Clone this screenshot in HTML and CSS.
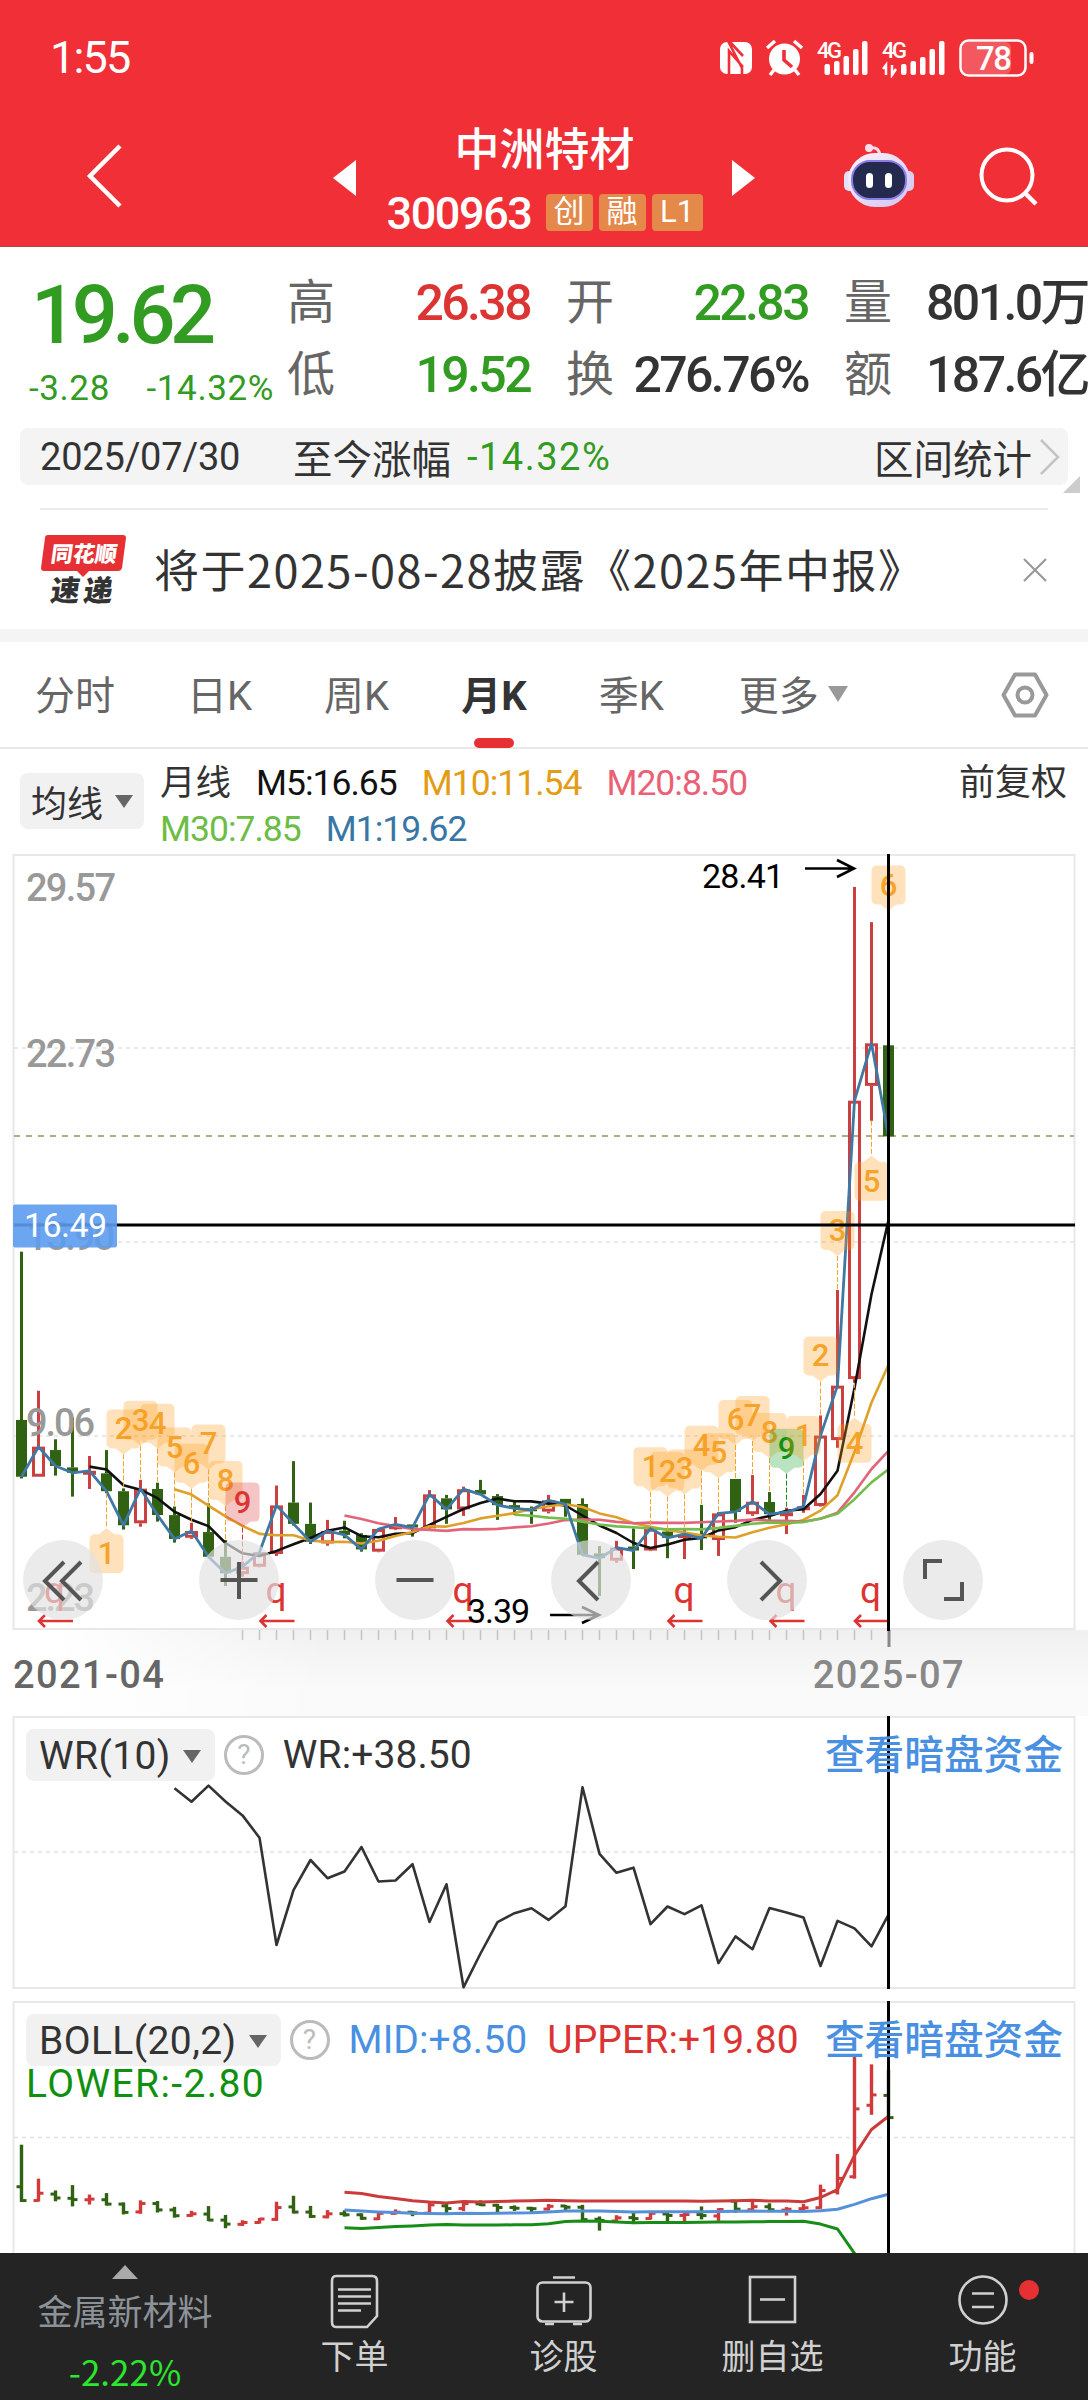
FILE: index.html
```html
<!doctype html>
<html lang="zh-CN">
<head>
  <meta charset="utf-8">
  <title>中洲特材 300963</title>
  <link rel="stylesheet" href="styles.css">
</head>
<body>
  <header class="top">
    <div class="status">
      <span class="clock">1:55</span>
      <svg class="status-icons" width="316" height="40" viewBox="19 6 316 40">
        <rect x="20" y="10" width="32" height="32" rx="7" fill="#fff"/>
        <path d="M28 9 L42 36 V43 M29 43 V19 L43 35 M30 10 L43 24" fill="none" stroke="#f12f37" stroke-width="2.6"/>
        <g fill="#fff">
          <circle cx="84.500" cy="27" r="15.500"/>
          <path d="M67 16 l8-7 M94 9 l8 7 M74 38 l-4 5 M95 38 l4 5" stroke="#fff" stroke-width="3.500"/>
        </g>
        <path d="M84 18 V28 L92 35" fill="none" stroke="#f12f37" stroke-width="3.600"/>
        <g fill="#fff">
          <text x="117" y="26" font-size="22" font-weight="500" textLength="25">4G</text>
          <rect x="124.500" y="32" width="5.500" height="11" rx="2"/>
          <rect x="134" y="29" width="5.500" height="14" rx="2"/>
          <rect x="143.500" y="24" width="5.500" height="19" rx="2"/>
          <rect x="153" y="17" width="5.500" height="26" rx="2"/>
          <rect x="162" y="9" width="5.500" height="34" rx="2"/>
          <text x="182" y="26" font-size="22" font-weight="500" textLength="25">4G</text>
          <path d="M186 43 V33 l-3 4 M192 33 V43 l4-6" fill="none" stroke="#fff" stroke-width="2.500"/>
          <rect x="201" y="32" width="5.500" height="11" rx="2"/>
          <rect x="210.500" y="29" width="5.500" height="14" rx="2"/>
          <rect x="220" y="25" width="5.500" height="18" rx="2"/>
          <rect x="229.500" y="17" width="5.500" height="26" rx="2"/>
          <rect x="239" y="9" width="5.500" height="34" rx="2"/>
          <rect x="262" y="10" width="49" height="32" rx="6" fill-opacity=".2"/>
          <rect x="260.500" y="8.500" width="65" height="35" rx="8" fill="none" stroke="#fff" stroke-width="2.500"/>
          <rect x="329.500" y="20" width="4" height="12" rx="2"/>
          <text x="276" y="38" font-size="33" font-weight="500" textLength="36">78</text>
        </g>
      </svg>
    </div>
    <div class="nav">
      <svg class="back" width="38" height="66" viewBox="0 0 38 66"><path d="M35 3 L5 33 L35 63" fill="none" stroke="#fff" stroke-width="4.500"/></svg>
      <svg class="prev" width="24" height="36" viewBox="0 0 24 36"><path d="M23 0 V36 L0 18z" fill="#fff"/></svg>
      <div class="title">
        <h1>中洲特材</h1>
        <div class="code"><span>300963</span><i>创</i><i>融</i><i>L1</i></div>
      </div>
      <svg class="next" width="24" height="36" viewBox="0 0 24 36"><path d="M0 0 V36 L23 18z" fill="#fff"/></svg>
      <svg class="robot" width="70" height="66" viewBox="0 0 70 66">
        <defs>
          <linearGradient id="shell" x1="0" y1="0" x2="1" y2="1"><stop offset="0" stop-color="#fdf5fb"/><stop offset="1" stop-color="#cfc5f3"/></linearGradient>
        </defs>
        <path d="M26 5 Q35 3 36 13" fill="none" stroke="#f6dbe9" stroke-width="3"/>
        <circle cx="25" cy="5" r="4" fill="#f9dfeb"/>
        <rect x="0" y="28" width="11" height="20" rx="5" fill="#e3e0fa"/>
        <rect x="59" y="28" width="11" height="20" rx="5" fill="#d8cdf3"/>
        <rect x="4" y="10" width="62" height="54" rx="27" fill="url(#shell)"/>
        <rect x="8" y="18" width="54" height="38" rx="18" fill="#232a4e" stroke="#8c7be8" stroke-width="2"/>
        <rect x="22" y="30" width="7" height="15" rx="3.500" fill="#fff"/>
        <rect x="41" y="30" width="7" height="15" rx="3.500" fill="#fff"/>
      </svg>
      <svg class="search" width="60" height="60" viewBox="0 0 60 60"><circle cx="28" cy="28" r="25.500" fill="none" stroke="#fff" stroke-width="4"/><path d="M46 46 L57 57" stroke="#fff" stroke-width="4.500"/></svg>
    </div>
  </header>

  <section class="quote">
    <div class="price">
      <strong>19.62</strong>
      <p><span>-3.28</span><span>-14.32%</span></p>
    </div>
    <div class="stats">
      <div><label>高</label><b class="up">26.38</b></div>
      <div><label>开</label><b class="down">22.83</b></div>
      <div><label>量</label><b>801.0万</b></div>
      <div><label>低</label><b class="down">19.52</b></div>
      <div><label>换</label><b>276.76%</b></div>
      <div><label>额</label><b>187.6亿</b></div>
    </div>
  </section>

  <section class="range">
    <span class="day">2025/07/30</span>
    <span class="since">至今涨幅</span>
    <span class="pct">-14.32%</span>
    <span class="interval">区间统计</span>
    <svg width="22" height="36" viewBox="0 0 22 36"><path d="M2 1 L19 18 L2 35" fill="none" stroke="#c4c4c4" stroke-width="2.500"/></svg>
    <i class="corner"></i>
  </section>

  <section class="news">
    <svg class="brand" width="88" height="72" viewBox="0 0 88 72">
      <path d="M8 1 H83 q3 0 3 3 L82 34 q-1 3-4 3 H49 L43 43 L37 37 H4 q-3 0-3-3 L5 4 q0-3 3-3z" fill="#e63034"/>
      <g transform="skewX(-8)">
        <text class="brand-a" x="14" y="28" textLength="66">同花顺</text>
        <text class="brand-b" x="19" y="67" textLength="62">速递</text>
      </g>
    </svg>
    <p>将于2025-08-28披露《2025年中报》</p>
    <svg class="close" width="26" height="26" viewBox="0 0 26 26"><path d="M2 2 L24 24 M24 2 L2 24" stroke="#999" stroke-width="2.200"/></svg>
  </section>

  <nav class="tabs">
    <a>分时</a>
    <a>日K</a>
    <a>周K</a>
    <a class="active">月K</a>
    <a>季K</a>
    <a class="more">更多<i></i></a>
    <svg width="48" height="46" viewBox="0 0 48 46"><path d="M14 2.500 H34 L45.500 23 L34 43.500 H14 L2.500 23z" fill="none" stroke="#999" stroke-width="4" stroke-linejoin="round"/><circle cx="24" cy="23" r="7.500" fill="none" stroke="#999" stroke-width="4"/></svg>
  </nav>

  <section class="ma">
    <button>均线<i></i></button>
    <div class="ma-values">
      <p><em>月线</em><span class="m5">M5:16.65</span><span class="m10">M10:11.54</span><span class="m20">M20:8.50</span></p>
      <p><span class="m30">M30:7.85</span><span class="m1">M1:19.62</span></p>
    </div>
    <span class="adjust">前复权</span>
  </section>

  <section class="panel kline">
    <svg id="kline" width="1088" height="778" viewBox="0 0 1088 778"></svg>
    <div class="controls">
      <button><svg viewBox="0 0 80 80"><path d="M41 22 L22 41 L41 60 M58 22 L39 41 L58 60"/></svg></button>
      <button><svg viewBox="0 0 80 80"><path d="M40 22 V59 M21.500 40 H58.500"/></svg></button>
      <button><svg viewBox="0 0 80 80"><path d="M21.500 40 H58.500"/></svg></button>
      <button><svg viewBox="0 0 80 80"><path d="M47 22 L28 41 L47 60"/></svg></button>
      <button><svg viewBox="0 0 80 80"><path d="M34 22 L53 41 L34 60"/></svg></button>
      <button><svg viewBox="0 0 80 80"><path d="M22 39 V21 H39 M59 42 V59 H41"/></svg></button>
    </div>
  </section>

  <section class="axis">
    <svg id="ticks" width="1088" height="20" viewBox="0 0 1088 20"></svg>
    <div class="dates"><span>2021-04</span><span class="last">2025-07</span></div>
  </section>

  <section class="panel wr">
    <svg id="wr" width="1088" height="273" viewBox="0 0 1088 273"></svg>
    <div class="legend">
      <button>WR(10)<i></i></button>
      <span class="help">?</span>
      <span>WR:+38.50</span>
      <a>查看暗盘资金</a>
    </div>
  </section>

  <section class="panel boll">
    <svg id="boll" width="1088" height="252" viewBox="0 0 1088 252"></svg>
    <div class="legend">
      <button>BOLL(20,2)<i></i></button>
      <span class="help">?</span>
      <span class="mid">MID:+8.50</span>
      <span class="upper">UPPER:+19.80</span>
      <a>查看暗盘资金</a>
      <span class="lower">LOWER:-2.80</span>
    </div>
  </section>

  <footer class="bar">
    <div class="sector">
      <i></i>
      <span>金属新材料</span>
      <b>-2.22%</b>
    </div>
    <div class="item">
      <svg viewBox="0 0 56 56"><path d="M9 2 H45 Q50 2 50 7 V42 L40 53 H9 Q5 53 5 48 V7 Q5 2 9 2z M11 15.500 H44 M11 22.500 H44 M11 29.500 H44 M11 36.500 H34"/></svg>
      <span>下单</span>
    </div>
    <div class="item">
      <svg viewBox="0 0 56 56"><rect x="1.500" y="8.500" width="53" height="39" rx="5"/><path d="M17 3.500 H39 M28 18.500 V38 M18.500 28 H37.500 M9 50 H18 M37 50 H46"/></svg>
      <span>诊股</span>
    </div>
    <div class="item">
      <svg viewBox="0 0 56 56"><rect x="5" y="3" width="45" height="45"/><path d="M15 25.500 H40"/></svg>
      <span>删自选</span>
    </div>
    <div class="item">
      <svg viewBox="0 0 56 56"><circle cx="28" cy="26" r="23.500"/><path d="M17 19.500 H39 M17 33 H39"/></svg>
      <span>功能</span>
      <i class="dot"></i>
    </div>
  </footer>
  <script src="chart.js"></script>
</body>
</html>
```
FILE: styles.css
```css
* {
  box-sizing: border-box;
}

body {
  margin: 0;
  width: 1088px;
  height: 2400px;
  overflow: hidden;
  background: #fff;
  color: #333;
  font-family: Roboto, "Noto Sans CJK SC", sans-serif;
  font-weight: 400;
}

p, h1 {
  margin: 0;
  font-weight: 400;
}

i, em {
  font-style: normal;
}

button {
  border: 0;
  padding: 0;
  font: inherit;
  letter-spacing: inherit;
  color: inherit;
}

svg {
  display: block;
  flex: none;
}

/* header */
.top {
  height: 247px;
  background: #f12f37;
  border-bottom: 1px solid #b0484c;
  color: #fff;
}

.status {
  display: flex;
  justify-content: space-between;
  align-items: center;
  height: 115px;
  padding: 0 53px 0 50px;
}

.clock {
  font-size: 45px;
  letter-spacing: -1.8px;
}

.nav {
  display: flex;
  height: 131px;
  padding-left: 85px;
}

.back {
  margin-top: 28px;
}

.prev {
  margin: 45px 0 0 210px;
}

.title {
  width: 375px;
  text-align: center;
}

h1 {
  margin-top: 9px;
  font-size: 45px;
  line-height: 54px;
  font-weight: 500;
}

.code {
  display: flex;
  justify-content: center;
  align-items: center;
  height: 54px;
  margin-top: 7px;
  font-size: 45px;
  letter-spacing: -1.4px;
}

.code span {
  margin-right: 14px;
  padding-top: 2px;
  font-weight: 500;
}

.code i {
  width: 47px;
  height: 37px;
  margin-right: 6px;
  border-radius: 4px;
  background: #e4894a;
  font-size: 31px;
  line-height: 36px;
  letter-spacing: 0;
}

.code i:last-child {
  width: 51px;
  margin-right: 0;
}

.next {
  margin-top: 45px;
}

.robot {
  margin: 28px 0 0 88px;
}

.search {
  margin: 32px 0 0 65px;
}

/* quote */
.quote {
  display: flex;
  height: 181px;
  padding-top: 20px;
}

.price {
  width: 287px;
  color: #329b21;
}

.price strong {
  display: block;
  padding-left: 31px;
  font-size: 81px;
  font-weight: 500;
  line-height: 98px;
  letter-spacing: -5.4px;
}

.price p {
  display: flex;
  justify-content: space-between;
  padding: 0 13px 0 29px;
  font-size: 35px;
  line-height: 48px;
  letter-spacing: .6px;
}

.stats {
  display: grid;
  grid-template-columns: 279px 278px 244px;
  grid-template-rows: 72px 72px;
  flex: none;
}

.stats div {
  display: flex;
  justify-content: space-between;
  align-items: center;
  padding-right: 36px;
  white-space: nowrap;
}

.stats div:nth-child(3n) {
  padding-right: 0;
}

.stats label {
  color: #666;
  font-size: 48px;
  line-height: 72px;
}

.stats b {
  font-size: 50px;
  font-weight: 500;
  line-height: 72px;
  letter-spacing: -2.6px;
}

.up {
  color: #dc3433;
}

.down {
  color: #329b21;
}

/* range bar */
.range {
  position: relative;
  display: flex;
  align-items: center;
  height: 57px;
  margin: 0 20px;
  padding: 0 7px 0 20px;
  border-radius: 8px;
  background: #f4f4f4;
  font-size: 39.500px;
}

.day {
  width: 253px;
  font-size: 38px;
  letter-spacing: -.2px;
}

.since {
  width: 174px;
}

.pct {
  flex: 1;
  color: #329b21;
  font-size: 38px;
  letter-spacing: 1.5px;
}

.interval {
  margin-right: 7px;
}

.corner {
  position: absolute;
  right: -12px;
  bottom: -8px;
  border-left: 17px solid transparent;
  border-bottom: 17px solid #ccc;
}

/* news */
.news {
  display: flex;
  align-items: center;
  height: 121px;
  margin: 23px 40px 0;
  border-top: 2px solid #ececec;
}

.brand {
  margin-right: 26px;
}

.brand-a, .brand-b {
  font-family: "Noto Sans CJK SC", sans-serif;
  font-weight: 900;
}

.brand-a {
  fill: #fff;
  font-size: 22px;
}

.brand-b {
  fill: #333;
  font-size: 29px;
}

.news p {
  flex: 1;
  font-family: "Noto Sans CJK SC", sans-serif;
  font-size: 45px;
  line-height: 60px;
  letter-spacing: 1.5px;
  margin-top: -2px;
  white-space: nowrap;
}

/* period tabs */
.tabs {
  display: flex;
  height: 120px;
  border-top: 13px solid #f4f4f4;
  border-bottom: 2px solid #e8e8e8;
  padding-left: 35px;
  color: #666;
  font-size: 40px;
  line-height: 109px;
}

.tabs a {
  position: relative;
  margin-right: 72px;
  white-space: nowrap;
}

.tabs .active {
  color: #333;
  font-weight: 700;
}

.active::after {
  content: "";
  position: absolute;
  left: 13px;
  bottom: -1px;
  width: 40px;
  height: 10px;
  border-radius: 5px;
  background: #e63034;
}

.tabs .more {
  margin-left: 3px;
}

.more i {
  display: inline-block;
  margin: 0 0 8px 9px;
  border: 10px solid transparent;
  border-top: 16px solid #999;
  border-bottom: 0;
}

.tabs svg {
  margin: 30px 39px 0 auto;
}

/* moving averages */
.ma {
  display: flex;
  height: 105px;
  padding: 0 21px 0 20px;
}

.ma button {
  display: flex;
  align-items: center;
  justify-content: center;
  width: 124px;
  height: 56px;
  margin: 24px 16px 0 0;
  border-radius: 8px;
  background: #f1f1f1;
  font-size: 36px;
}

.ma button i, .legend button i {
  margin-left: 12px;
  border: 9px solid transparent;
  border-top: 13px solid #666;
  border-bottom: 0;
}

.ma-values {
  flex: 1;
  padding-top: 11px;
  font-size: 35.500px;
}

.ma-values p {
  display: flex;
  gap: 25px;
  height: 46px;
  line-height: 46px;
}

.ma-values span {
  letter-spacing: -1px;
}

.m5 { color: #111; }
.m10 { color: #e39c14; }
.m20 { color: #ea6075; }
.m30 { color: #6cbd45; }
.m1 { color: #3876a6; }

.adjust {
  padding-top: 11px;
  font-size: 36px;
  line-height: 46px;
}

/* charts */
.panel {
  position: relative;
}

.kline {
  height: 776px;
}

.scale {
  font-weight: 500;
}

.controls {
  position: absolute;
  left: 23px;
  top: 686px;
  display: flex;
  gap: 96px;
}

.controls button {
  width: 80px;
  height: 80px;
  border-radius: 50%;
  background: rgba(226, 226, 226, .68);
}

.controls path {
  fill: none;
  stroke: #555;
  stroke-width: 4;
}

.axis {
  height: 86px;
  background: linear-gradient(90deg, #fff 5%, rgba(255, 255, 255, 0) 30%), linear-gradient(#f0f0f0, #fafafa 70%);
}

.dates {
  display: flex;
  justify-content: space-between;
  padding: 0 123px 0 13px;
  color: #666;
  font-size: 38px;
  font-weight: 500;
  line-height: 50px;
  letter-spacing: 1.4px;
}

.last {
  color: #888;
}

.wr {
  height: 285px;
}

.boll {
  height: 252px;
  overflow: hidden;
}

.legend {
  position: absolute;
  left: 26px;
  right: 25px;
  top: 13px;
  display: flex;
  flex-wrap: wrap;
  align-items: center;
  font-size: 39px;
  letter-spacing: .1px;
  white-space: nowrap;
}

.legend button {
  display: flex;
  align-items: center;
  height: 52px;
  margin-right: 9px;
  padding: 2px 14px 0 13px;
  border-radius: 8px;
  background: #f1f1f1;
  letter-spacing: .4px;
}

.help {
  width: 40px;
  height: 40px;
  margin-right: 19px;
  border: 3px solid #bbb;
  border-radius: 50%;
  color: #bbb;
  font-size: 28px;
  line-height: 34px;
  text-align: center;
}

.legend a {
  margin-left: auto;
  padding-top: 2px;
  color: #4a90e2;
  font-size: 39.700px;
  font-weight: 500;
  letter-spacing: 0;
  line-height: 50px;
}

.mid {
  margin-right: 20px;
  color: #4a90e2;
}

.upper {
  color: #dc3433;
}

.lower {
  width: 100%;
  margin-top: -5px;
  color: #109010;
  line-height: 46px;
  letter-spacing: 1.4px;
}

/* bottom bar */
.bar {
  display: grid;
  grid-template-columns: 250px 209px 209px 209px 211px;
  height: 147px;
  background: #242424;
  color: #d0d0d0;
}

.sector {
  display: flex;
  flex-direction: column;
  align-items: center;
  color: #8b9298;
  font-size: 35px;
}

.sector i {
  margin: 12px 0 10px;
  border: 13px solid transparent;
  border-bottom: 14px solid #aaa;
  border-top: 0;
}

.sector span {
  line-height: 50px;
}

.sector b {
  margin-top: 4px;
  color: #2ae82a;
  font-family: "Noto Sans CJK SC", sans-serif;
  font-size: 35px;
  font-weight: 400;
  line-height: 56px;
}

.item {
  position: relative;
  display: flex;
  flex-direction: column;
  align-items: center;
  font-size: 34px;
}

.item svg {
  width: 56px;
  height: 56px;
  margin: 21px 0 5px;
  fill: none;
  stroke: #d0d0d0;
  stroke-width: 2.6;
}

.item span {
  line-height: 44px;
}

.dot {
  position: absolute;
  left: 142px;
  top: 27px;
  width: 20px;
  height: 20px;
  border-radius: 50%;
  background: #e63034;
}
```
FILE: chart.js
```js
// monthly bars 2021-04 .. 2025-07: open, close, high, low
const bars = [
  [9.63, 7.63, 15.56, 7.57], [7.63, 8.69, 10.66, 7.63], [8.57, 8.01, 8.95, 7.67], [7.96, 7.77, 9.72, 6.93],
  [7.75, 7.84, 8.36, 7.20], [7.75, 7.12, 8.57, 7.05], [7.12, 5.92, 7.22, 5.77], [5.99, 7.21, 7.52, 5.87],
  [7.20, 6.28, 7.42, 6.05], [6.28, 5.44, 6.58, 5.31], [5.48, 5.72, 6.01, 5.44], [5.68, 4.81, 6.69, 4.81],
  [4.81, 4.23, 5.40, 3.78], [4.20, 4.46, 4.64, 4.11], [4.46, 4.97, 4.97, 4.44], [4.91, 6.62, 7.32, 4.84],
  [6.72, 5.97, 8.18, 5.91], [5.97, 5.34, 6.72, 5.26], [5.28, 5.72, 6.11, 5.20], [5.73, 5.58, 6.08, 5.46],
  [5.58, 5.07, 5.64, 4.99], [4.99, 5.79, 5.79, 4.97], [5.78, 5.95, 6.21, 5.75], [5.95, 5.84, 5.95, 5.52],
  [5.81, 7.01, 7.16, 5.73], [6.87, 6.48, 6.99, 5.97], [6.48, 7.19, 7.28, 6.25], [7.16, 7.01, 7.52, 6.99],
  [6.95, 6.63, 7.02, 6.11], [6.63, 6.52, 6.79, 6.28], [6.52, 6.46, 6.58, 5.97], [6.40, 6.80, 6.99, 6.34],
  [6.85, 6.67, 6.85, 6.22], [6.67, 4.88, 6.87, 4.86], [4.93, 4.76, 5.19, 3.43], [4.67, 5.13, 5.37, 4.60],
  [5.17, 5.03, 5.81, 4.38], [5.03, 5.80, 5.89, 5.01], [5.70, 5.48, 5.73, 4.76], [5.48, 5.61, 5.81, 4.73],
  [5.61, 5.46, 6.64, 5.05], [5.40, 6.34, 6.38, 4.84], [7.55, 6.39, 7.55, 6.01], [6.31, 6.75, 7.69, 6.25],
  [6.74, 6.31, 7.09, 6.11], [6.25, 6.38, 6.54, 5.61], [6.46, 6.59, 6.99, 6.36], [6.60, 9.08, 9.79, 6.58],
  [8.92, 10.84, 14.21, 8.65], [11.07, 20.88, 28.41, 10.94], [21.40, 22.90, 27.17, 20.17], [22.83, 19.62, 26.38, 19.52]
];

const RED = '#cb3f3f';
const GREEN = '#316213';
const LAST_X = 888.5;
const x = i => 21.5 + i * 17;
const closes = bars.map(b => b[1]);

function el(svg, name, attrs, text) {
  const node = document.createElementNS('http://www.w3.org/2000/svg', name);
  for (const key in attrs) node.setAttribute(key, attrs[key]);
  if (text) node.textContent = text;
  svg.appendChild(node);
}

function line(svg, x1, y1, x2, y2, stroke, width, dash) {
  el(svg, 'line', { x1, y1, x2, y2, stroke, 'stroke-width': width, 'stroke-dasharray': dash || 'none' });
}

function curve(svg, values, y, stroke, width) {
  const points = [];
  values.forEach((v, i) => { if (v !== null) points.push(x(i) + ',' + y(v).toFixed(1)); });
  el(svg, 'polyline', { points: points.join(' '), fill: 'none', stroke, 'stroke-width': width, 'stroke-linejoin': 'round' });
}

function frame(svg, height, grid) {
  el(svg, 'rect', { x: 13.5, y: 1, width: 1061, height, fill: 'none', stroke: '#e8e8e8', 'stroke-width': 2 });
  grid.forEach(y => line(svg, 14, y, 1074, y, '#e2e2e2', 1.6, '4 4'));
}

function average(n) {
  return closes.map((c, i) => i < n - 1 ? null : closes.slice(i - n + 1, i + 1).reduce((a, b) => a + b) / n);
}

// candles
const k = document.getElementById('kline');
const ky = p => (29.57 - p) * 28.384;
frame(k, 774, [194, 388, 582]);
line(k, 14, 282, 1074, 282, '#b5ab80', 2, '6 6');

bars.forEach(([open, close, high, low], i) => {
  const up = close > open;
  const top = ky(Math.max(open, close));
  const bottom = Math.max(ky(Math.min(open, close)), top + 3);
  const color = up ? RED : GREEN;
  line(k, x(i), ky(high), x(i), top, color, 3);
  line(k, x(i), bottom, x(i), ky(low), color, 3);
  if (up) el(k, 'rect', { x: x(i) - 5, y: top + 1.5, width: 10, height: Math.max(bottom - top - 3, 1), fill: 'none', stroke: color, 'stroke-width': 3 });
  else el(k, 'rect', { x: x(i) - 5.5, y: top, width: 11, height: bottom - top, fill: color });
});

function label(svg, str, px, py, width, fill, size, cls) {
  el(svg, 'text', { x: px, y: py, fill, 'font-size': size, textLength: width, class: cls || 'note' }, str);
}
label(k, '29.57', 26, 47, 90, '#999', 38, 'scale');
label(k, '22.73', 26, 213, 90, '#999', 38, 'scale');
label(k, '15.90', 26, 396, 89, '#999', 38, 'scale');
label(k, '9.06', 26, 582, 69, '#999', 38, 'scale');
label(k, '2.23', 26, 757, 69, '#999', 38, 'scale');

curve(k, average(5), ky, '#111', 2.6);
curve(k, average(10), ky, '#dfa02a', 2.6);
curve(k, average(20), ky, '#e2647a', 2.6);
curve(k, average(30), ky, '#74bd4c', 2.6);
curve(k, closes, ky, '#3f78a4', 2.8);

// nine-turn marks: bar, number, below the bar
const marks = [
  [5, 1, 1], [6, 2], [7, 3], [8, 4], [9, 5], [10, 6], [11, 7], [12, 8], [13, 9, 0, '#dc3433'],
  [37, 1], [38, 2], [39, 3], [40, 4], [41, 5], [42, 6], [43, 7], [44, 8], [45, 9, 0, '#109010'],
  [46, 1], [47, 2], [48, 3], [49, 4, 1], [50, 5, 1], [51, 6]
];
marks.forEach(([i, n, below, color]) => {
  const cx = x(i);
  const top = below ? ky(bars[i][3]) + 41 : ky(bars[i][2]) - 79;
  const fill = color === '#109010' ? '#12a023' : color || '#ff9b18';
  const ink = color || '#f5a32a';
  el(k, 'rect', { x: cx - 17, y: top, width: 34, height: 39, rx: 5, fill, 'fill-opacity': .29 });
  if (below) {
    el(k, 'path', { d: `M${cx - 8} ${top} L${cx} ${top - 6} L${cx + 8} ${top}z`, fill, 'fill-opacity': .29 });
    line(k, cx, top - 41, cx, top - 6, ink, 1, '5 2');
  } else {
    el(k, 'path', { d: `M${cx - 8} ${top + 39} L${cx} ${top + 45} L${cx + 8} ${top + 39}z`, fill, 'fill-opacity': .29 });
    if (i < 51) line(k, cx, top + 45, cx, top + 79, ink, 1, '5 2');
  }
  el(k, 'text', { x: cx, y: top + 30, fill: ink, 'font-size': 31, 'font-weight': 500, 'text-anchor': 'middle' }, String(n));
});

// report marks
[38, 259.5, 446.5, 667.5, 769.5, 854].forEach(left => {
  el(k, 'text', { x: left + 6, y: 749, fill: '#dc3433', 'font-size': 37 }, 'q');
  el(k, 'path', { d: `M${left + 35} 767 H${left + 1} M${left + 7} 761 L${left + 1} 767 L${left + 7} 773`, fill: 'none', stroke: '#dc3433', 'stroke-width': 2.6 });
});

label(k, '28.41', 702, 34, 82, '#000', 34);
el(k, 'path', { d: 'M805 14.500 H854 M837 6 L854 14.500 L837 23', fill: 'none', stroke: '#000', 'stroke-width': 2.6 });
label(k, '3.39', 467, 769, 63, '#000', 34);
el(k, 'path', { d: 'M550 761 H599 M582 753 L599 761 L582 769', fill: 'none', stroke: '#000', 'stroke-width': 2.6 });

// crosshair
line(k, 14, 371, 1075, 371, '#000', 3);
line(k, LAST_X, 0, LAST_X, 777, '#000', 3);
el(k, 'rect', { x: 13, y: 350.5, width: 104, height: 43, rx: 2, fill: '#5c9cef', 'fill-opacity': .9 });
label(k, '16.49', 24, 383, 83, '#fff', 34);

// date ticks
const ticks = document.getElementById('ticks');
for (let i = 13; i < 51; i++) line(ticks, x(i), 0, x(i), 10, '#c4c4c4', 1.5);
line(ticks, LAST_X + .5, 0, LAST_X + .5, 17, '#888', 3);

// williams %R
const w = document.getElementById('wr');
frame(w, 271, [136]);
const wr = bars.map((b, i) => {
  if (i < 9) return null;
  const win = bars.slice(i - 9, i + 1);
  const hh = Math.max(...win.map(v => v[2]));
  const ll = Math.min(...win.map(v => v[3]));
  return (hh - b[1]) / (hh - ll) * 100;
});
curve(w, wr, v => 71.3 + (99.2 - v) * 2.0986, '#333', 2.6);
line(w, LAST_X, 0, LAST_X, 273, '#000', 3);

// bollinger bands
const b = document.getElementById('boll');
const by = p => 144.7 + (15.56 - p) * 6.92;
frame(b, 290, [136.5]);
bars.forEach(([open, close, high, low], i) => {
  const color = close > open ? '#d23a3a' : GREEN;
  line(b, x(i), by(high) - 1, x(i), by(low) + 1, color, 3.4);
  line(b, x(i) - 5, by(open), x(i), by(open), color, 3);
  line(b, x(i), by(close), x(i) + 5, by(close), color, 3);
});
const mid = average(20);
const dev = mid.map((m, i) => m === null ? null : Math.sqrt(closes.slice(i - 19, i + 1).reduce((s, c) => s + (c - m) ** 2, 0) / 19));
curve(b, mid.map((m, i) => m === null ? null : m + 2 * dev[i]), by, '#cc3b3b', 3);
curve(b, mid, by, '#5590d8', 3);
curve(b, mid.map((m, i) => m === null ? null : m - 2 * dev[i]), by, '#178c17', 3);
line(b, LAST_X, 0, LAST_X, 252, '#000', 3);
```
